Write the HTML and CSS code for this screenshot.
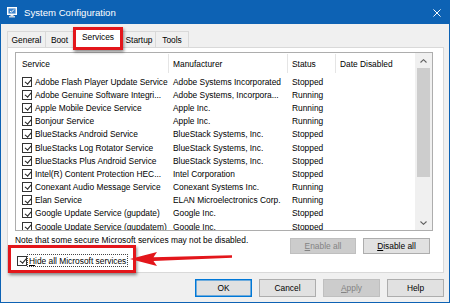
FILE: index.html
```html
<!DOCTYPE html>
<html>
<head>
<meta charset="utf-8">
<link rel="stylesheet" href="styles.css">
</head>
<body>
<div class="window">
  <div class="titlebar">
    <svg class="app-icon" viewBox="0 0 10 11">
      <rect x="0.5" y="0.5" width="9" height="7" fill="#e9eef5" stroke="#ffffff"/>
      <rect x="1.5" y="1.5" width="7" height="5" fill="#3f86cf"/>
      <polyline points="3,4 4.3,5.3 7,2.5" fill="none" stroke="#ffffff" stroke-width="1"/>
      <rect x="3.5" y="8" width="3" height="1" fill="#dfe6ee"/>
      <rect x="2" y="9" width="6" height="1.5" fill="#c9d3de"/>
    </svg>
    <span class="title">System Configuration</span>
    <svg class="close" viewBox="0 0 9 9">
      <path d="M0.5 0.5 L8.5 8.5 M8.5 0.5 L0.5 8.5" stroke="#ffffff" stroke-width="1.1"/>
    </svg>
  </div>

  <div class="tabs">
    <div class="tab tab-general">General</div>
    <div class="tab tab-boot">Boot</div>
    <div class="tab tab-services active">Services</div>
    <div class="tab tab-startup">Startup</div>
    <div class="tab tab-tools">Tools</div>
  </div>

  <div class="panel">
    <div class="listbox">
      <div class="list-main">
        <div class="lrow header">
          <div class="hcell c-service">Service</div>
          <div class="hcell">Manufacturer</div>
          <div class="hcell">Status</div>
          <div class="hcell last">Date Disabled</div>
        </div>
        <div class="rows">
          <div class="lrow item"><div class="cell c-service"><span class="cb"></span>Adobe Flash Player Update Service</div><div class="cell">Adobe Systems Incorporated</div><div class="cell">Stopped</div><div class="cell"></div></div>
          <div class="lrow item"><div class="cell c-service"><span class="cb"></span>Adobe Genuine Software Integri...</div><div class="cell">Adobe Systems, Incorpora...</div><div class="cell">Running</div><div class="cell"></div></div>
          <div class="lrow item"><div class="cell c-service"><span class="cb"></span>Apple Mobile Device Service</div><div class="cell">Apple Inc.</div><div class="cell">Running</div><div class="cell"></div></div>
          <div class="lrow item"><div class="cell c-service"><span class="cb"></span>Bonjour Service</div><div class="cell">Apple Inc.</div><div class="cell">Running</div><div class="cell"></div></div>
          <div class="lrow item"><div class="cell c-service"><span class="cb"></span>BlueStacks Android Service</div><div class="cell">BlueStack Systems, Inc.</div><div class="cell">Stopped</div><div class="cell"></div></div>
          <div class="lrow item"><div class="cell c-service"><span class="cb"></span>BlueStacks Log Rotator Service</div><div class="cell">BlueStack Systems, Inc.</div><div class="cell">Stopped</div><div class="cell"></div></div>
          <div class="lrow item"><div class="cell c-service"><span class="cb"></span>BlueStacks Plus Android Service</div><div class="cell">BlueStack Systems, Inc.</div><div class="cell">Stopped</div><div class="cell"></div></div>
          <div class="lrow item"><div class="cell c-service"><span class="cb"></span>Intel(R) Content Protection HEC...</div><div class="cell">Intel Corporation</div><div class="cell">Stopped</div><div class="cell"></div></div>
          <div class="lrow item"><div class="cell c-service"><span class="cb"></span>Conexant Audio Message Service</div><div class="cell">Conexant Systems Inc.</div><div class="cell">Running</div><div class="cell"></div></div>
          <div class="lrow item"><div class="cell c-service"><span class="cb"></span>Elan Service</div><div class="cell">ELAN Microelectronics Corp.</div><div class="cell">Running</div><div class="cell"></div></div>
          <div class="lrow item"><div class="cell c-service"><span class="cb"></span>Google Update Service (gupdate)</div><div class="cell">Google Inc.</div><div class="cell">Stopped</div><div class="cell"></div></div>
          <div class="lrow item"><div class="cell c-service"><span class="cb"></span>Google Update Service (gupdatem)</div><div class="cell">Google Inc.</div><div class="cell">Stopped</div><div class="cell"></div></div>
        </div>
      </div>
      <div class="scrollbar">
        <div class="sb-btn">
          <svg class="caret" viewBox="0 0 7 4"><polyline points="0.5,3.5 3.5,0.7 6.5,3.5" fill="none" stroke="#606060" stroke-width="1.1"/></svg>
        </div>
        <div class="sb-track"><div class="sb-thumb"></div></div>
        <div class="sb-btn">
          <svg class="caret" viewBox="0 0 7 4"><polyline points="0.5,0.5 3.5,3.3 6.5,0.5" fill="none" stroke="#606060" stroke-width="1.1"/></svg>
        </div>
      </div>
    </div>

    <div class="note-row">
      <span class="note">Note that some secure Microsoft services may not be disabled.</span>
      <div class="note-btns">
        <div class="btn btn-enable disabled"><u>E</u>nable all</div>
        <div class="btn btn-disable"><u>D</u>isable all</div>
      </div>
    </div>

    <div class="hide-row">
      <span class="cb"></span>
      <span class="focus"><u>H</u>ide all Microsoft services</span>
    </div>
  </div>

  <div class="footer">
    <div class="btn fbtn default">OK</div>
    <div class="btn fbtn">Cancel</div>
    <div class="btn fbtn disabled"><u>A</u>pply</div>
    <div class="btn fbtn">Help</div>
  </div>

  <div class="annot annot-tab"></div>
  <div class="annot annot-hide"></div>
  <svg class="arrow" viewBox="126 249 112 22">
    <polygon points="130,259 157,252 153.5,257.3 232,255.3 232,257.8 153.5,261 157,266" fill="#e3161b"/>
  </svg>
</div>
</body>
</html>
```

FILE: styles.css
```css
* { box-sizing: border-box; }
html, body { margin: 0; padding: 0; }
body {
  width: 450px;
  height: 303px;
  overflow: hidden;
  font-family: "Liberation Sans", Arial, sans-serif;
  font-size: 8.4px;
  color: #000;
  background: #ffffff;
}
.window {
  position: relative;
  width: 450px;
  height: 303px;
  border: 1px solid #0d62b4;
  background: #f0f0f0;
  display: flex;
  flex-direction: column;
}

/* Title bar */
.titlebar {
  height: 23px;
  flex: none;
  background: #0d62b4;
  display: flex;
  align-items: center;
  padding-left: 6px;
  color: #fff;
}
.app-icon { width: 10px; height: 11px; margin-right: 7px; flex: none; }
.title { font-size: 9.6px; flex: 1; }
.close { width: 8px; height: 8px; margin-right: 8px; flex: none; }

/* Tabs */
.tabs {
  height: 23px;
  flex: none;
  display: flex;
  align-items: flex-end;
  padding-left: 6px;
}
.tab {
  height: 16px;
  border: 1px solid #d9d9d9;
  border-bottom: none;
  background: #f0f0f0;
  margin-right: -1px;
  display: flex;
  align-items: center;
  justify-content: center;
  padding-top: 1px;
}
.tab-general { width: 39px; }
.tab-boot { width: 29px; }
.tab-services { width: 50px; }
.tab-startup { width: 34px; }
.tab-tools { width: 34px; }
.tab.active {
  height: 20px;
  background: #fff;
  margin-bottom: -1px;
  position: relative;
  z-index: 1;
  padding-top: 0;
  padding-bottom: 3px;
}

/* Panel */
.panel {
  flex: none;
  margin: 0 5px 0 6px;
  height: 226px;
  border: 1px solid #d9d9d9;
  background: #fff;
  padding: 4px 10px 0 7px;
}
.listbox {
  width: 418px;
  height: 179px;
  border: 1px solid #adadad;
  display: flex;
}
.list-main { flex: 1; overflow: hidden; display: flex; flex-direction: column; }
.lrow {
  display: grid;
  grid-template-columns: 153px 119px 48px 1fr;
}
.header { height: 22px; flex: none; }
.hcell {
  display: flex;
  align-items: center;
  padding-left: 4px;
  border-right: 1px solid #e5e5e5;
  margin: 1px 0 2px;
  white-space: nowrap;
}
.hcell.c-service { padding-left: 6px; }
.hcell.last { border-right: none; }
.rows { flex: 1; overflow: hidden; }
.item { height: 13.2px; align-items: center; }
.cell { white-space: nowrap; overflow: hidden; padding-left: 4px; display: flex; align-items: center; }
.cell.c-service { padding-left: 6px; }

.cb {
  position: relative;
  width: 10px;
  height: 10px;
  border: 1px solid #333;
  background: #fff;
  margin-right: 3px;
  flex: none;
}
.cb::after {
  content: "";
  position: absolute;
  left: 2.6px;
  top: 0.4px;
  width: 2.6px;
  height: 5.4px;
  border-right: 1px solid #222;
  border-bottom: 1px solid #222;
  transform: rotate(40deg);
}

/* Scrollbar */
.scrollbar {
  width: 17px;
  flex: none;
  background: #f0f0f0;
  display: flex;
  flex-direction: column;
}
.sb-btn {
  height: 15px;
  flex: none;
  display: flex;
  align-items: center;
  justify-content: center;
}
.caret { width: 7px; height: 4px; }
.sb-track { flex: 1; padding: 0 2px; }
.sb-thumb { height: 109px; background: #cdcdcd; }

/* Note row */
.note-row {
  width: 418px;
  display: flex;
  justify-content: space-between;
  align-items: flex-start;
}
.note { margin-top: 4px; line-height: 11px; white-space: nowrap; }
.note-btns { display: flex; gap: 7px; margin-top: 7px; margin-right: 3px; }
.btn {
  height: 16px;
  border: 1px solid #adadad;
  background: #e1e1e1;
  display: flex;
  align-items: center;
  justify-content: center;
  white-space: nowrap;
}
.btn u { text-decoration-thickness: 1px; text-underline-offset: 1px; }
.btn.disabled { background: #cccccc; border-color: #bfbfbf; color: #838383; }
.btn-enable { width: 66px; }
.btn-disable { width: 67px; }

/* Hide row */
.hide-row {
  height: 13px;
  display: flex;
  align-items: center;
  margin-left: 2px;
}
.hide-row .cb { margin-right: 0; }
.focus {
  height: 13px;
  display: flex;
  align-items: center;
  padding: 0 1px 0 1px;
  border: 1px dotted #444;
  white-space: nowrap;
}

/* Footer */
.footer {
  flex: none;
  display: flex;
  justify-content: flex-end;
  gap: 7px;
  margin-top: 6px;
  padding-right: 5px;
}
.fbtn { width: 57px; height: 18px; }
.fbtn.default { border-color: #0078d7; box-shadow: inset 0 0 0 0.5px #0078d7; }

/* Annotations */
.annot {
  position: absolute;
  z-index: 2;
  border: 3px solid #e3161b;
  box-shadow: 1px 2px 3px rgba(0,0,0,0.45);
  pointer-events: none;
}
.annot-tab { left: 72px; top: 26px; width: 50px; height: 23px; }
.annot-hide { left: 7px; top: 244px; width: 128px; height: 28px; }
.arrow {
  position: absolute;
  z-index: 2;
  left: 125px;
  top: 248px;
  width: 112px;
  height: 22px;
  pointer-events: none;
}
```
